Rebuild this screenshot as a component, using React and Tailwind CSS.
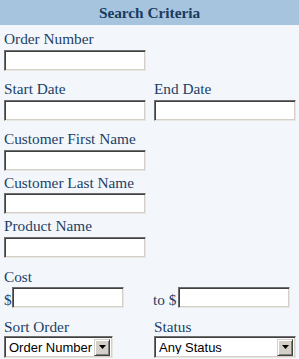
import React from "react";

const serif = { fontFamily: '"Liberation Serif", "Times New Roman", serif' };

function Input({ w = "w-[142px]" }) {
  return (
    <input
      type="text"
      className={`block ${w} h-[21px] bg-white border border-t-[#6e6e6e] border-l-[#6e6e6e] border-b-[#e8e6e1] border-r-[#e8e6e1] shadow-[inset_1px_1px_0_#404040,inset_-1px_-1px_0_#d4d0c8] outline-none`}
    />
  );
}

function Label({ children, className = "" }) {
  return (
    <div className={`text-[15.3px] leading-[17px] text-[#1b3f66] ${className}`}>{children}</div>
  );
}

function FakeSelect({ value, w }) {
  return (
    <div
      className={`${w} h-[22px] flex items-center bg-white border border-t-[#6e6e6e] border-l-[#6e6e6e] border-b-[#e8e6e1] border-r-[#e8e6e1] shadow-[inset_1px_1px_0_#404040,inset_-1px_-1px_0_#d4d0c8] pl-[4px] pr-[2px]`}
    >
      <span
        className="flex-1 text-[13px] leading-none text-black whitespace-nowrap overflow-hidden"
        style={{ fontFamily: '"Liberation Sans", Arial, sans-serif' }}
      >
        {value}
      </span>
      <div className="w-[16px] h-[17px] bg-[#d4d0c8] border border-t-[#d4d0c8] border-l-[#d4d0c8] border-b-[#404040] border-r-[#404040] shadow-[inset_1px_1px_0_#ffffff,inset_-1px_-1px_0_#808080] flex items-center justify-center">
        <svg width="7" height="4" viewBox="0 0 7 4">
          <path d="M0 0h7L3.5 4z" fill="#000" />
        </svg>
      </div>
    </div>
  );
}

export default function App() {
  return (
    <div className="w-[299px] h-[359px] bg-[#f3f7fb] overflow-hidden" style={serif}>
      <div className="h-[25px] bg-[#a6c4de] flex items-center justify-center">
        <span className="text-[15.3px] font-bold text-[#1a3a5e] leading-none">Search Criteria</span>
      </div>
      <div className="px-[4px] pt-[5px]">
        <Label>Order Number</Label>
        <div className="mt-[3px]"><Input /></div>

        <div className="grid grid-cols-[150px_1fr] mt-[9px]">
          <div>
            <Label>Start Date</Label>
            <div className="mt-[3px]"><Input /></div>
          </div>
          <div>
            <Label>End Date</Label>
            <div className="mt-[3px]"><Input /></div>
          </div>
        </div>

        <Label className="mt-[9px]">Customer First Name</Label>
        <div className="mt-[3px]"><Input /></div>

        <Label className="mt-[3px]">Customer Last Name</Label>
        <div className="mt-[2px]"><Input /></div>

        <Label className="mt-[3px]">Product Name</Label>
        <div className="mt-[3px]"><Input /></div>

        <Label className="mt-[10px]">Cost</Label>
        <div className="grid grid-cols-[149px_1fr] mt-[2px]">
          <div className="flex items-end">
            <span className="text-[15.3px] leading-[17px] text-[#1b3f66] w-[8px]">$</span>
            <Input w="w-[112px]" />
          </div>
          <div className="flex items-end">
            <span className="text-[15.3px] leading-[17px] text-[#1b3f66] w-[25px]">to $</span>
            <Input w="w-[112px]" />
          </div>
        </div>

        <div className="grid grid-cols-[150px_1fr] mt-[10px]">
          <div>
            <Label>Sort Order</Label>
            <div className="mt-[1px]"><FakeSelect value="Order Number" w="w-[109px]" /></div>
          </div>
          <div>
            <Label>Status</Label>
            <div className="mt-[1px]"><FakeSelect value="Any Status" w="w-[142px]" /></div>
          </div>
        </div>
      </div>
    </div>
  );
}
